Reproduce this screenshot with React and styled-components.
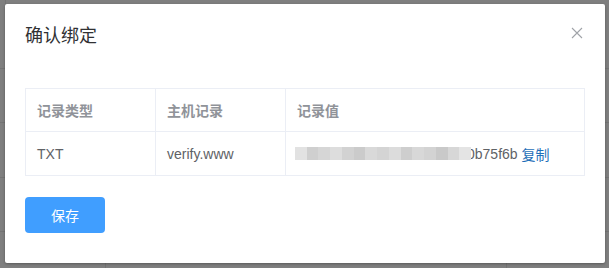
import React from 'react';
import styled, { createGlobalStyle } from 'styled-components';

const GlobalStyle = createGlobalStyle`
  html, body {
    margin: 0;
    padding: 0;
    width: 609px;
    height: 268px;
    overflow: hidden;
    font-family: "Helvetica Neue", Helvetica, "Liberation Sans", Arial, "Noto Sans CJK SC", sans-serif;
  }
`;

const Page = styled.div`
  width: 609px;
  height: 268px;
  background: #fff;
  position: relative;
  display: flex;
  flex-direction: column;
`;

const PageRow = styled.div`
  height: ${p => p.h}px;
  flex-shrink: 0;
  border-bottom: 1px solid #e8e8e8;
  display: flex;
`;

const PageCell = styled.div`
  width: ${p => p.w}px;
  border-right: 1px solid #e8e8e8;
`;

const Mask = styled.div`
  position: absolute;
  inset: 0;
  background: rgba(0, 0, 0, 0.5);
  padding: 4px 4px 0 5px;
`;

const Dialog = styled.div`
  width: 600px;
  height: 259px;
  box-sizing: border-box;
  background: #fff;
  border-radius: 2px;
  box-shadow: 0 1px 3px rgba(0, 0, 0, 0.3);
  position: relative;
`;

const Header = styled.div`
  padding: 20px 20px 10px;
`;

const Title = styled.span`
  font-size: 18px;
  line-height: 24px;
  color: #303133;
`;

const Close = styled.button`
  position: absolute;
  top: 21px;
  right: 20px;
  width: 16px;
  height: 16px;
  padding: 0;
  border: 0;
  background: none;
  display: flex;
  align-items: center;
  justify-content: center;
`;

const Body = styled.div`
  padding: 30px 20px;
`;

const Table = styled.table`
  width: 560px;
  border-collapse: collapse;
  table-layout: fixed;
  font-size: 14px;
`;

const Th = styled.th`
  height: 43px;
  padding: 0 11px;
  text-align: left;
  font-weight: bold;
  color: #909399;
  border: 1px solid #ebeef5;
  width: ${p => (p.w ? `${p.w}px` : 'auto')};
  box-sizing: border-box;
`;

const Td = styled.td`
  height: 43px;
  padding: 0 10px 0 11px;
  color: #606266;
  border: 1px solid #ebeef5;
  white-space: nowrap;
`;

const Value = styled.span`
  display: inline-flex;
  align-items: center;
  margin-left: -2px;
`;

const Mosaic = styled.span`
  display: inline-flex;
  height: 13px;
  width: 176px;
  position: relative;
  z-index: 1;
  filter: blur(0.4px);
`;

const Tile = styled.span`
  flex: 1;
  background: ${p => p.c};
`;

const Tail = styled.span`
  margin-left: -4px;
`;

const CopyLink = styled.a`
  color: #1f6fb9;
  margin-left: 4px;
  cursor: pointer;
`;

const SaveButton = styled.button`
  margin-top: 21px;
  width: 80px;
  height: 36px;
  border: 0;
  border-radius: 4px;
  background: #409eff;
  color: #fff;
  font-size: 14px;
  font-family: inherit;
  display: block;
`;

const tiles = [
  '#e2e2e2', '#cfcfcf', '#d6d6d6', '#dddddd', '#d2d2d2', '#cbcbcb', '#d9d9d9',
  '#d4d4d4', '#dcdcdc', '#cecece', '#d8d8d8', '#d3d3d3', '#c9c9c9', '#d7d7d7', '#e4e4e4',
];

export default function App() {
  return (
    <>
      <GlobalStyle />
      <Page>
        <PageRow h={68}><PageCell w={5} /></PageRow>
        <PageRow h={53}><PageCell w={5} /></PageRow>
        <PageRow h={54}><PageCell w={5} /></PageRow>
        <PageRow h={53}>
          <PageCell w={105} />
          <PageCell w={400} />
        </PageRow>
        <PageRow h={40}>
          <PageCell w={105} />
          <PageCell w={400} />
        </PageRow>
        <Mask>
          <Dialog>
            <Header>
              <Title>确认绑定</Title>
              <Close aria-label="关闭">
                <svg width="12" height="12" viewBox="0 0 12 12">
                  <path d="M1 1 L11 11 M11 1 L1 11" stroke="#a0a3a8" strokeWidth="1.1" />
                </svg>
              </Close>
            </Header>
            <Body>
              <Table>
                <thead>
                  <tr>
                    <Th w={130}>记录类型</Th>
                    <Th w={130}>主机记录</Th>
                    <Th>记录值</Th>
                  </tr>
                </thead>
                <tbody>
                  <tr>
                    <Td>TXT</Td>
                    <Td>verify.www</Td>
                    <Td>
                      <Value>
                        <Mosaic>
                          {tiles.map((c, i) => <Tile key={i} c={c} />)}
                        </Mosaic>
                        <Tail>0b75f6b</Tail>
                        <CopyLink>复制</CopyLink>
                      </Value>
                    </Td>
                  </tr>
                </tbody>
              </Table>
              <SaveButton>保存</SaveButton>
            </Body>
          </Dialog>
        </Mask>
      </Page>
    </>
  );
}
